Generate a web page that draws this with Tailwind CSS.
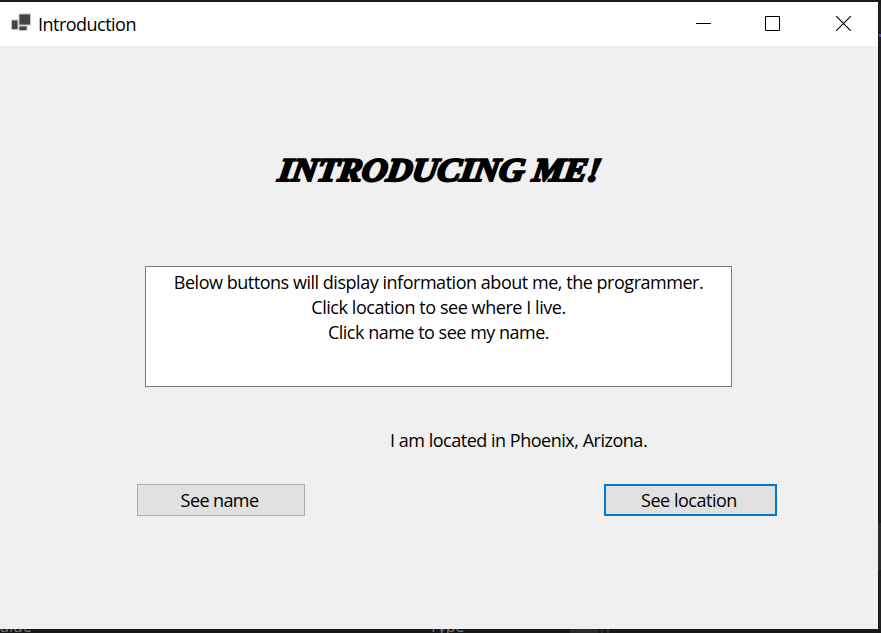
<!DOCTYPE html>
<html lang="en">
<head>
<meta charset="utf-8">
<title>Introduction</title>
<script src="https://cdn.jsdelivr.net/npm/@tailwindcss/browser@4"></script>
</head>
<body class="w-[881px] h-[633px] overflow-hidden bg-[#1b1a1d] pt-[2px] font-['Open_Sans','Noto_Sans',sans-serif] text-[18px] text-black">
  <div class="flex">
    <div class="w-[878px] h-[627px] bg-[#f0f0f0] flex flex-col">
      <header class="h-[44px] shrink-0 bg-white flex items-center">
        <svg class="ml-[11px] -mt-[4px]" width="21" height="20" viewBox="0 0 21 20"><g fill="#444" stroke="#c4c4c4" stroke-width="1"><path d="M.5 8h6.500v9.500h-6.500zM8 2h11.500v11h-11.500zM8 14h8v4.500h-8z"/></g></svg>
        <h1 class="ml-[6px] leading-[24px] whitespace-nowrap tracking-[-0.52px]">Introduction</h1>
        <div class="ml-auto flex items-center pr-[27px] gap-[53px] -mt-[1px]">
          <svg width="15" height="15" shape-rendering="crispEdges"><path d="M0 7h15v1H0z"/></svg>
          <svg class="ml-[1px]" width="15" height="15"><path d="M.5.5h14v14H.5z" fill="none" stroke="#000"/></svg>
          <svg class="ml-[3px]" width="15" height="15"><path d="M0 0l15 15M15 0L0 15" stroke="#000" stroke-width="1.100"/></svg>
        </div>
      </header>
      <main class="flex flex-col">
        <h2 class="mt-[104px] ml-[279px] h-[40px] leading-[40px] whitespace-nowrap font-['Liberation_Serif',serif] font-bold italic text-[33px] tracking-[-0.3px] [-webkit-text-stroke:2.2px_black] origin-left [transform:scaleX(1.07)_skewX(-8deg)]">INTRODUCING ME!</h2>
        <div class="mt-[76px] ml-[145px] w-[587px] h-[121px] bg-white border border-[#7a7a7a] pt-[3px] text-center leading-[25px] whitespace-nowrap">
          <p class="tracking-[-0.47px]">Below buttons will display information about me, the programmer.</p>
          <p class="tracking-[-0.44px]">Click location to see where I live.</p>
          <p class="tracking-[-0.49px]">Click name to see my name.</p>
        </div>
        <p class="mt-[41px] ml-[390px] leading-[25px] whitespace-nowrap tracking-[-0.48px]">I am located in Phoenix, Arizona.</p>
        <div class="mt-[31px] ml-[137px] w-[640px] flex justify-between">
          <button class="w-[168px] h-[32px] bg-[#e1e1e1] border border-[#adadad] pr-[3px] leading-[30px] whitespace-nowrap tracking-[-0.6px]">See name</button>
          <button class="w-[173px] h-[32px] bg-[#e1e1e1] border-2 border-[#0078d7] pr-[3px] leading-[28px] whitespace-nowrap tracking-[-0.48px]">See location</button>
        </div>
      </main>
    </div>
    <div class="w-[3px] h-[627px] bg-[#1e1e1e] flex flex-col">
      <div class="mt-[32px] ml-[1px] h-[3px] bg-[#5a4bb5]"></div>
      <div class="mt-[486px] h-[47px] bg-[#2c2c2e]"></div>
    </div>
  </div>
  <footer class="h-[4px] overflow-hidden bg-[#18171a] flex text-[16px] leading-[16px] text-[#77777a]">
    <span class="w-[423px] -mt-[11px]">alue</span>
    <span class="ml-[6px] w-[141px] -mt-[11px]">Type</span>
    <span class="w-[28px] h-[4px] bg-[#29292b]"></span>
    <span class="ml-[3px] w-[2px] h-[4px] bg-[#303032]"></span>
    <span class="ml-[4px] w-[2px] h-[4px] bg-[#303032]"></span>
  </footer>
</body>
</html>
